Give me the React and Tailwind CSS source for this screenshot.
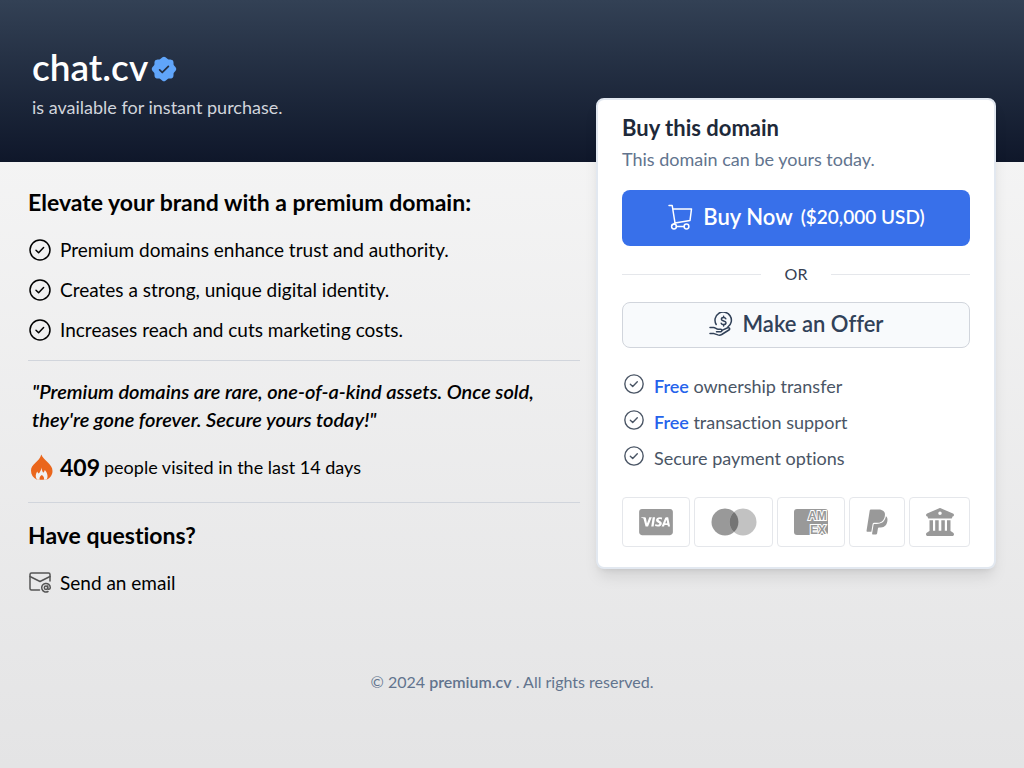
import { FaCcVisa, FaPaypal } from "react-icons/fa";
import { FaBuildingColumns } from "react-icons/fa6";
import { PiSealCheckFill } from "react-icons/pi";

const benefits = [
  "Premium domains enhance trust and authority.",
  "Creates a strong, unique digital identity.",
  "Increases reach and cuts marketing costs.",
];

const perks = [
  { lead: "Free", text: "ownership transfer" },
  { lead: "Free", text: "transaction support" },
  { text: "Secure payment options" },
];

function CheckIcon({ className }) {
  return (
    <svg
      viewBox="0 0 24 24"
      fill="none"
      stroke="currentColor"
      strokeWidth="1.5"
      strokeLinecap="round"
      strokeLinejoin="round"
      className={className}
      aria-hidden="true"
    >
      <circle cx="12" cy="12" r="10" />
      <path d="M8 12.300l2.600 2.500 5-5.300" />
    </svg>
  );
}

function CartIcon() {
  return (
    <svg
      viewBox="0 0 28 28"
      fill="none"
      stroke="currentColor"
      strokeWidth="1.5"
      strokeLinecap="round"
      strokeLinejoin="round"
      className="size-7"
      aria-hidden="true"
    >
      <path d="M2 2.500H5.200L8 20L23 17.500L24.500 6H6" />
      <path d="M8 20L5.500 22" />
      <circle cx="7" cy="23.500" r="2.400" />
      <circle cx="19.500" cy="23.500" r="2.400" />
      <path d="M9.400 23.500H17.100" />
    </svg>
  );
}

function OfferIcon() {
  return (
    <svg
      viewBox="0 0 24 24"
      fill="none"
      stroke="currentColor"
      strokeWidth="1.5"
      strokeLinecap="round"
      strokeLinejoin="round"
      className="size-6"
      aria-hidden="true"
    >
      <path d="M7.200 12.500A8.200 8.200 0 1 1 18.800 15" />
      <path d="M16.800 6.800c-.4-.9-1.200-1.300-2.200-1.300-1.200 0-2.200.6-2.200 1.700 0 2.500 4.600 1.100 4.600 3.600 0 1.100-1.100 1.800-2.400 1.800-1.100 0-2-.5-2.400-1.400M14.600 4.200v1.300M14.600 12.600v1.300" />
      <path d="M1 15.500h3.500c2 0 2.800 1.700 4.500 1.700h2.700c1.600 0 1.600 2.500 0 2.500H7.500" />
      <path d="M12.900 18.400l5.800-2.600c1.900-.6 2.600 1.300 1.200 2.200l-7.200 4.500c-1.200.7-2.500.8-3.800.4L5 21.600H1" />
    </svg>
  );
}

function FlameIcon() {
  return (
    <svg viewBox="0 0 24 28" className="mr-1.5 ml-0.5 h-7 w-6 text-[#ea661c]" aria-hidden="true">
      <path
        fill="currentColor"
        d="M11.300 1.500c.8 3 4 5.200 6.600 8 2.600 2.600 4.600 5 4.600 8.500 0 4-2.300 7.200-5.900 8.800H7C3 24.900 1 21.600 1 17.500 1 11 9.500 8.800 11.300 1.500z"
      />
      <path
        fill="#f1f1f1"
        d="M11.500 14.500c.2 2 .7 3.700 1.700 5.200.9-.7 1.400-1.600 1.600-2.700 2.400 2.400 3.800 6.700 1.800 9.800h-2.800c.7-1.900 0-3.400-2-4.800-2 1.400-2.700 2.900-2 4.800H7c-2-3.100-1.400-5.800.2-8.300.4.9.9 1.500 1.600 2 1.400-1.600 2.400-3.600 2.700-6z"
      />
    </svg>
  );
}

function EmailIcon() {
  return (
    <svg
      viewBox="0 0 24 24"
      fill="none"
      stroke="currentColor"
      strokeWidth="1.5"
      strokeLinecap="round"
      strokeLinejoin="round"
      className="mr-2 size-6 text-[#555555]"
      aria-hidden="true"
    >
      <path d="M11.500 19H3.500a1.500 1.500 0 0 1-1.500-1.500V3.500A1.500 1.500 0 0 1 3.500 2h17A1.500 1.500 0 0 1 22 3.500V10" />
      <path d="M2 5.500l10 5L22 5.500" />
      <circle cx="18" cy="16.700" r="1.700" />
      <path d="M19.700 15v2.200c0 1.600 2.600 1.300 2.600-.5A4.300 4.300 0 1 0 20 20.500" />
    </svg>
  );
}

function AmexIcon() {
  return (
    <svg viewBox="0 0 36 28" className="h-7 w-9" role="img" aria-label="American Express">
      <rect x="1" y="1" width="34" height="26" rx="3" fill="currentColor" />
      <g
        className="font-['Liberation_Sans',sans-serif] text-[12px] font-bold"
        fill="currentColor"
        stroke="white"
        strokeWidth="2"
        paintOrder="stroke"
      >
        <text x="15" y="12">AM</text>
        <text x="17" y="26">EX</text>
      </g>
    </svg>
  );
}

function PaymentMethods() {
  return (
    <ul className="mt-[21px] flex justify-between gap-1 text-[#999999]">
      <li className="flex h-[50px] w-[68px] items-center justify-center rounded-sm border border-gray-200">
        <FaCcVisa className="h-[30px] w-[34px]" title="Visa" />
      </li>
      <li className="flex h-[50px] w-[79px] items-center justify-center rounded-sm border border-gray-200">
        <svg viewBox="0 0 46 28" className="h-7 w-[46px]" role="img" aria-label="Mastercard">
          <circle cx="14" cy="14" r="13.5" fill="#999999" />
          <circle cx="32" cy="14" r="13.5" fill="#c2c2c2" />
          <path d="M23 4a13.500 13.500 0 0 1 0 20a13.500 13.500 0 0 1 0-20z" fill="#757575" />
        </svg>
      </li>
      <li className="flex h-[50px] w-[68px] items-center justify-center overflow-hidden rounded-sm border border-gray-200">
        <AmexIcon />
      </li>
      <li className="flex h-[50px] w-[56px] items-center justify-center rounded-sm border border-gray-200">
        <FaPaypal className="h-7 w-6" title="PayPal" />
      </li>
      <li className="flex h-[50px] w-[61px] items-center justify-center rounded-sm border border-gray-200">
        <FaBuildingColumns className="size-7" title="Bank transfer" />
      </li>
    </ul>
  );
}

function PurchaseCard() {
  return (
    <aside className="-mt-16 w-[400px] shrink-0 self-start rounded-lg border-2 border-slate-200 bg-white px-6 pt-3.5 pb-5 shadow-lg">
      <h2 className="text-[22px] leading-7 font-bold text-gray-800">Buy this domain</h2>
      <p className="mt-[3px] text-lg leading-7 text-slate-500">This domain can be yours today.</p>

      <button
        type="button"
        className="mt-[17px] flex h-14 w-full cursor-pointer items-center justify-center rounded-lg bg-[#3870ea] pb-0.5 text-white"
      >
        <CartIcon />
        <span className="ml-2 text-[22px] leading-7 font-semibold">Buy Now</span>
        <span className="ml-2 text-[19px] leading-7 font-semibold">($20,000 USD)</span>
      </button>

      <div className="flex h-14 items-center text-base text-gray-700">
        <span className="h-px flex-1 bg-gray-200" />
        <span className="w-[70px] text-center">OR</span>
        <span className="h-px flex-1 bg-gray-200" />
      </div>

      <button
        type="button"
        className="flex h-[46px] w-full cursor-pointer items-center justify-center gap-2.5 rounded-lg border border-gray-300 bg-slate-50 pb-0.5 text-slate-700"
      >
        <OfferIcon />
        <span className="text-[22px] leading-7 font-semibold">Make an Offer</span>
      </button>

      <ul className="mt-5 text-lg leading-9 text-gray-600">
        {perks.map((perk) => (
          <li key={perk.text} className="flex items-center">
            <CheckIcon className="mr-2 mb-1 size-6 p-px" />
            <span>
              {perk.lead && <b className="font-semibold text-[#2563eb]">{perk.lead} </b>}
              {perk.text}
            </span>
          </li>
        ))}
      </ul>

      <PaymentMethods />
    </aside>
  );
}

export default function App() {
  return (
    <div className="min-h-screen bg-linear-to-b from-[#f8f8f8] to-[#e4e4e5] font-[Lato,sans-serif] text-black [font-variant-ligatures:none]">
      <header className="h-[162px] bg-linear-to-b from-[#334155] to-[#0f172a] px-8 pt-[43px]">
        <h1 className="flex items-center gap-0.5 text-[37px] leading-12 font-semibold text-white">
          chat.cv
          <PiSealCheckFill className="mt-1 size-7 text-[#60a5fa]" />
        </h1>
        <p className="mt-0.5 text-lg leading-7 text-gray-300">is available for instant purchase.</p>
      </header>

      <main className="flex items-start gap-4 px-7">
        <section className="min-w-0 flex-1 pt-6">
          <h2 className="text-[23px] leading-8 font-bold">Elevate your brand with a premium domain:</h2>
          <ul className="mt-3 text-[19px] leading-10">
            {benefits.map((benefit) => (
              <li key={benefit} className="flex items-center">
                <CheckIcon className="mr-2 size-6" />
                {benefit}
              </li>
            ))}
          </ul>

          <blockquote className="mt-2.5 border-t border-gray-300 px-1 pt-4 text-[20px] leading-7 font-semibold italic">
            "Premium domains are rare, one-of-a-kind assets. Once sold, they're gone forever. Secure yours today!"
          </blockquote>

          <p className="mt-[18px] flex items-center border-b border-gray-300 pb-[19px] text-lg leading-8">
            <FlameIcon />
            <b className="mr-1 text-[23px] leading-8">409</b>
            people visited in the last 14 days
          </p>

          <h2 className="mt-4 text-[23px] leading-8 font-bold">Have questions?</h2>
          <a href="#contact" className="mt-3 flex items-center text-[19px] leading-10">
            <EmailIcon />
            Send an email
          </a>
        </section>

        <PurchaseCard />
      </main>

      <footer className="mt-[67px] text-center text-base text-slate-500">
        © 2024 <b className="font-semibold">premium.cv</b> . All rights reserved.
      </footer>
    </div>
  );
}
